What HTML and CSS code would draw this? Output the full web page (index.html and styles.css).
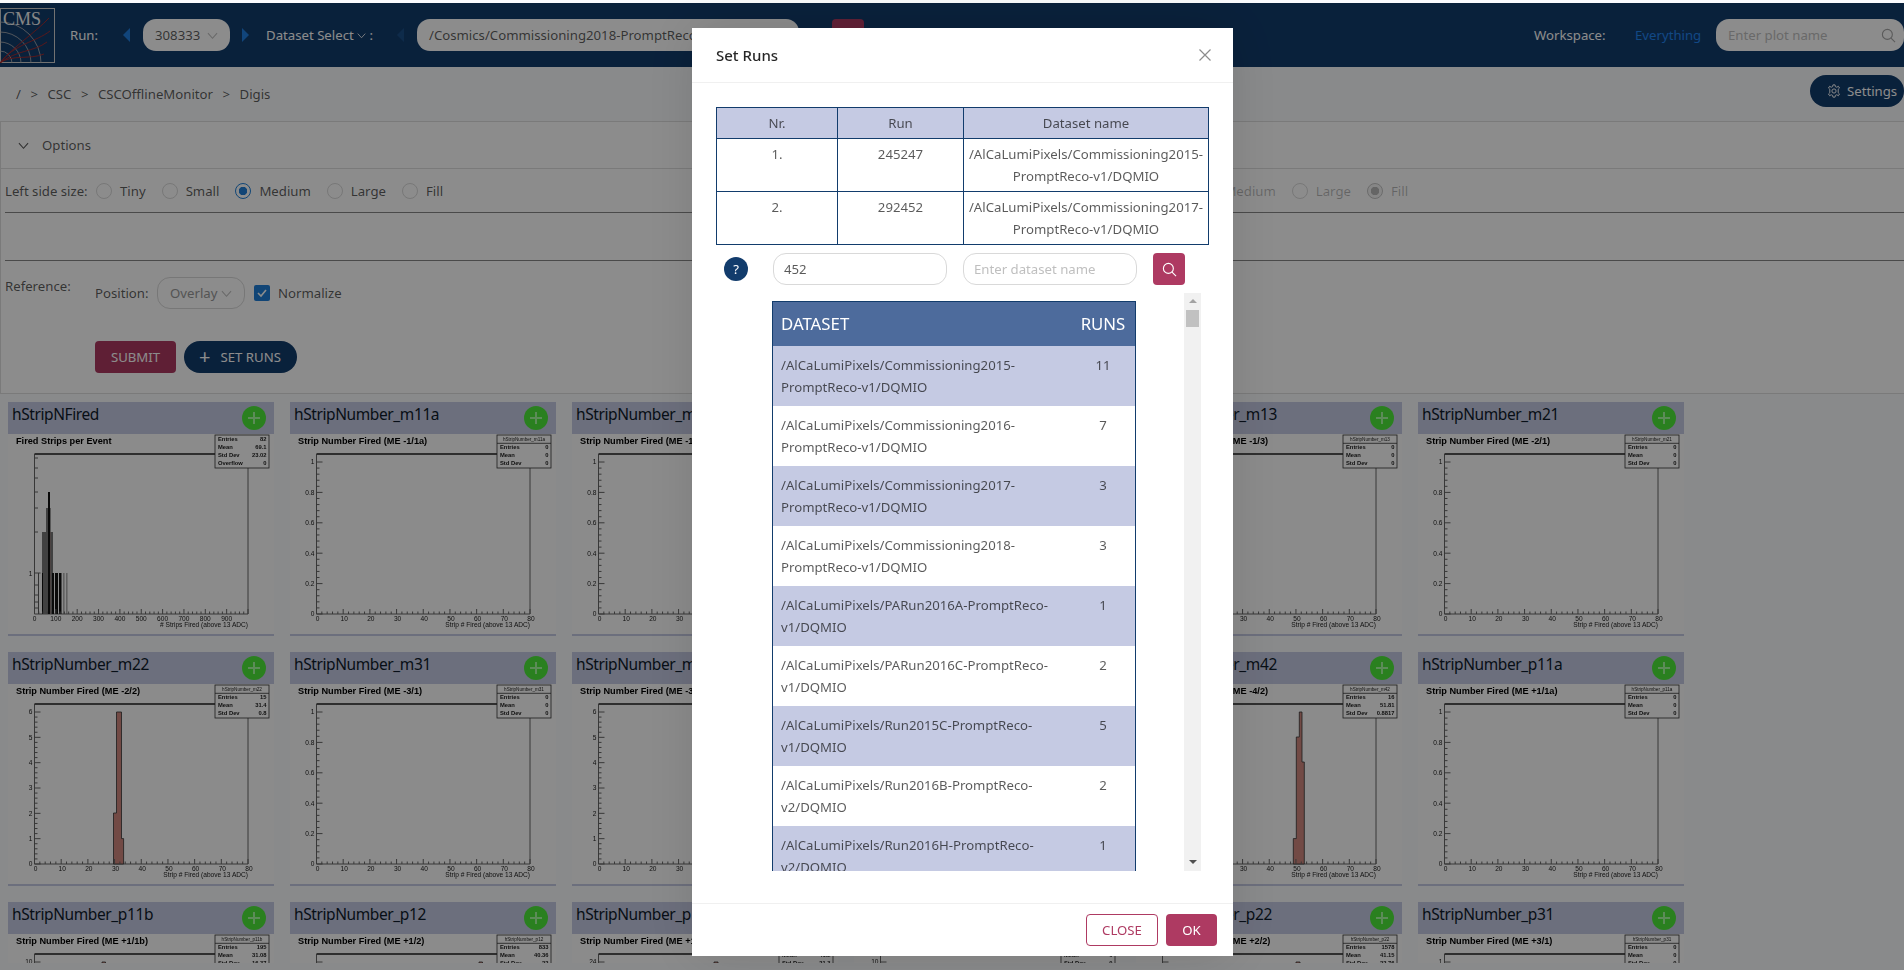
FILE: index.html
```html
<!DOCTYPE html>
<html>
<head>
  <title>DQM Plots</title>
  <link rel="stylesheet" href="styles.css">
</head>
<body>

  <div class="app">
    <header class="topbar">
      <svg class="logo" viewBox="0 0 55 55">
        <rect x="0.5" y="0.5" width="54" height="54" fill="none" stroke="#d0d0d0"/>
        <g fill="none" stroke="#b8b8b8" stroke-width="0.8">
          <path d="M0 14 A41 41 0 0 1 41 55"/>
          <path d="M0 24 A31 31 0 0 1 31 55"/>
          <path d="M0 34 A21 21 0 0 1 21 55"/>
          <path d="M0 43 A12 12 0 0 1 12 55"/>
        </g>
        <g fill="none" stroke="#b02a2a" stroke-width="0.9">
          <path d="M0 55 C14 38 36 24 49 10"/>
          <path d="M0 55 C14 36 36 34 50 23"/>
          <path d="M0 55 C16 42 34 44 47 34"/>
          <path d="M0 55 C12 46 30 52 44 46"/>
        </g>
        <text class="logo-text" x="3" y="17">CMS</text>
      </svg>
      <span class="bar-label run-label">Run:</span>
      <span class="arrow arrow-left"></span>
      <div class="pill run-pill"><span>308333</span><svg class="chev" viewBox="0 0 12 12"><path d="M1 3.5 L6 9 L11 3.5"/></svg></div>
      <span class="arrow arrow-right"></span>
      <span class="bar-label dataset-label">Dataset Select <svg class="chev chev-light" viewBox="0 0 12 12"><path d="M1 3.5 L6 9 L11 3.5"/></svg> :</span>
      <span class="arrow arrow-left arrow-off"></span>
      <div class="pill dataset-pill">/Cosmics/Commissioning2018-PromptReco-v1/DQMIO</div>
      <div class="bar-red"></div>
      <span class="bar-label workspace-label">Workspace:</span>
      <a class="workspace-link">Everything</a>
      <div class="pill search-pill"><span>Enter plot name</span>
        <svg class="search-icon" viewBox="0 0 16 16"><circle cx="6.8" cy="6.8" r="5.3"/><path d="M10.7 10.7 L15 15"/></svg>
      </div>
    </header>

    <div class="crumbs">
      <div class="crumb-list">
        <span>/</span><i>&gt;</i><span>CSC</span><i>&gt;</i><span>CSCOfflineMonitor</span><i>&gt;</i><span>Digis</span>
      </div>
      <button class="settings-btn">
        <svg viewBox="0 0 16 16"><circle cx="8" cy="8" r="2.4"/><path d="M6.8 1 H9.2 L9.6 3 L11.2 3.7 L13 2.6 L14.3 4.6 L12.8 6 V10 L14.3 11.4 L13 13.4 L11.2 12.3 L9.6 13 L9.2 15 H6.8 L6.4 13 L4.8 12.3 L3 13.4 L1.7 11.4 L3.2 10 V6 L1.7 4.6 L3 2.6 L4.8 3.7 L6.4 3 Z"/></svg>
        Settings
      </button>
    </div>

    <section class="options">
      <div class="options-head">
        <svg class="chev chev-dark" viewBox="0 0 12 12"><path d="M1 3.5 L6 9 L11 3.5"/></svg>
        Options
      </div>
      <div class="size-row">
        <div class="size-group">
          <span class="size-label">Left side size:</span>
          <label class="radio"><b></b>Tiny</label>
          <label class="radio"><b></b>Small</label>
          <label class="radio on"><b></b>Medium</label>
          <label class="radio"><b></b>Large</label>
          <label class="radio"><b></b>Fill</label>
        </div>
        <div class="size-group off">
          <span class="size-label">Right side size:</span>
          <label class="radio"><b></b>Tiny</label>
          <label class="radio"><b></b>Small</label>
          <label class="radio"><b></b>Medium</label>
          <label class="radio"><b></b>Large</label>
          <label class="radio on"><b></b>Fill</label>
        </div>
      </div>
      <div class="blank-row"></div>
      <div class="reference">
        <span class="reference-label">Reference:</span>
        <div class="reference-body">
          <div class="position-row">
            <span class="position-label">Position:</span>
            <div class="pill overlay-pill"><span>Overlay</span><svg class="chev" viewBox="0 0 12 12"><path d="M1 3.5 L6 9 L11 3.5"/></svg></div>
            <span class="check"><svg viewBox="0 0 16 16"><path d="M4 8 L7 11 L12 5"/></svg></span>
            <span>Normalize</span>
          </div>
          <div class="action-row">
            <button class="submit-btn">SUBMIT</button>
            <button class="runs-btn"><span class="plus">+</span>SET RUNS</button>
          </div>
        </div>
      </div>
    </section>

    <main class="plot-grid" id="plot-grid"></main>
  </div>

  <!-- Set Runs dialog -->
  <div class="backdrop"></div>
  <div class="modal">
    <div class="modal-head">
      <span>Set Runs</span>
      <svg class="modal-x" viewBox="0 0 12 12"><path d="M0.5 0.5 L11.5 11.5 M11.5 0.5 L0.5 11.5"/></svg>
    </div>
    <div class="modal-body">
      <table class="runs-table">
        <tr><th class="col-nr">Nr.</th><th class="col-run">Run</th><th>Dataset name</th></tr>
        <tr><td>1.</td><td>245247</td><td>/AlCaLumiPixels/Commissioning2015-PromptReco-v1/DQMIO</td></tr>
        <tr><td>2.</td><td>292452</td><td>/AlCaLumiPixels/Commissioning2017-PromptReco-v1/DQMIO</td></tr>
      </table>

      <div class="search-row">
        <span class="help">?</span>
        <div class="field">452</div>
        <div class="field field-empty">Enter dataset name</div>
        <button class="search-btn"><svg viewBox="0 0 16 16"><circle cx="6.8" cy="6.8" r="5.3"/><path d="M10.7 10.7 L15 15"/></svg></button>
      </div>

      <div class="list-wrap">
        <div class="list-clip">
          <table class="dataset-table">
            <tr><th>DATASET</th><th class="runs-col">RUNS</th></tr>
            <tr><td>/AlCaLumiPixels/Commissioning2015-PromptReco-v1/DQMIO</td><td class="runs-col">11</td></tr>
            <tr><td>/AlCaLumiPixels/Commissioning2016-PromptReco-v1/DQMIO</td><td class="runs-col">7</td></tr>
            <tr><td>/AlCaLumiPixels/Commissioning2017-PromptReco-v1/DQMIO</td><td class="runs-col">3</td></tr>
            <tr><td>/AlCaLumiPixels/Commissioning2018-PromptReco-v1/DQMIO</td><td class="runs-col">3</td></tr>
            <tr><td>/AlCaLumiPixels/PARun2016A-PromptReco-v1/DQMIO</td><td class="runs-col">1</td></tr>
            <tr><td>/AlCaLumiPixels/PARun2016C-PromptReco-v1/DQMIO</td><td class="runs-col">2</td></tr>
            <tr><td>/AlCaLumiPixels/Run2015C-PromptReco-v1/DQMIO</td><td class="runs-col">5</td></tr>
            <tr><td>/AlCaLumiPixels/Run2016B-PromptReco-v2/DQMIO</td><td class="runs-col">2</td></tr>
            <tr><td>/AlCaLumiPixels/Run2016H-PromptReco-v2/DQMIO</td><td class="runs-col">1</td></tr>
          </table>
        </div>
        <div class="scrollbar">
          <span class="scroll-up"></span>
          <span class="scroll-thumb"></span>
          <span class="scroll-down"></span>
        </div>
      </div>
    </div>
    <div class="modal-foot">
      <button class="close-btn">CLOSE</button>
      <button class="ok-btn">OK</button>
    </div>
  </div>

  <script src="plots.js"></script>
</body>
</html>
```

FILE: styles.css
```css
body {
  margin: 0;
  height: 970px;
  overflow: hidden;
  background-color: #fafbfd;
  font-family: "Noto Sans", sans-serif;
  font-size: 13.2px;
  line-height: 22px;
  color: rgba(0, 0, 0, 0.65);
}

button {
  font: inherit;
  border: none;
  cursor: pointer;
}

.app {
  height: 963px;
  padding-top: 3px;
  box-sizing: border-box;
  overflow: hidden;
}

/* Top bar */
.topbar {
  display: flex;
  align-items: center;
  height: 64px;
  background-color: #123c6c;
}

.logo {
  width: 55px;
  height: 55px;
  flex-shrink: 0;
}

.logo-text {
  font-family: "Liberation Serif", serif;
  font-size: 18px;
  fill: #f5f5f5;
}

.bar-label {
  color: #fff;
  white-space: nowrap;
}

.run-label {
  margin-left: 15px;
  width: 53px;
}

.arrow {
  width: 0;
  height: 0;
  border-top: 7px solid transparent;
  border-bottom: 7px solid transparent;
}

.arrow-left {
  border-right: 7px solid #1f7fe0;
}

.arrow-right {
  border-left: 7px solid #1f7fe0;
}

.arrow-off {
  border-right-color: #1b4f88;
}

.pill {
  display: flex;
  align-items: center;
  justify-content: space-between;
  height: 32px;
  box-sizing: border-box;
  border-radius: 13px;
  background-color: #fff;
  padding: 0 12px;
  white-space: nowrap;
  overflow: hidden;
}

.run-pill {
  width: 87px;
  margin-left: 13px;
}

.run-pill + .arrow {
  margin-left: 12px;
}

.dataset-label {
  margin-left: 17px;
  width: 131px;
}

.dataset-pill {
  width: 382px;
  margin-left: 13px;
}

.bar-red {
  width: 32px;
  height: 32px;
  margin-left: 33px;
  border-radius: 4px;
  background-color: #ae3a62;
}

.workspace-label {
  margin-left: auto;
  width: 101px;
}

.workspace-link {
  width: 81px;
  color: #2185f0;
}

.search-pill {
  width: 188px;
  padding-right: 8px;
  color: #bfbfbf;
}

.search-icon,
.search-btn svg {
  width: 15px;
  height: 15px;
  fill: none;
  stroke: #a6a6a6;
  stroke-width: 1.2;
}

.chev {
  width: 11px;
  height: 11px;
  fill: none;
  stroke: #bfbfbf;
  stroke-width: 1.1;
}

.chev-light {
  stroke: #fff;
  width: 9px;
  height: 9px;
}

.chev-dark {
  stroke: #555;
  margin-right: 13px;
}

/* Breadcrumb row */
.crumbs {
  display: flex;
  justify-content: space-between;
  align-items: center;
  height: 54px;
  box-sizing: border-box;
  padding: 0 0 0 16px;
}

.crumb-list i {
  font-style: normal;
  margin: 0 9.5px;
}

.settings-btn {
  display: flex;
  align-items: center;
  gap: 6px;
  width: 94px;
  height: 32px;
  margin-top: -6px;
  padding: 0 0 0 17px;
  border-radius: 16px;
  background-color: #123c6c;
  color: #fff;
}

.settings-btn svg {
  width: 14px;
  height: 14px;
  fill: none;
  stroke: #fff;
  stroke-width: 1.1;
}

/* Options panel */
.options {
  border: 1px solid #dedede;
  border-right: none;
  background-color: #fff;
  height: 273px;
  box-sizing: border-box;
}

.options-head {
  display: flex;
  align-items: center;
  height: 46px;
  padding-left: 17px;
  border-bottom: 1px solid #dedede;
}

.size-row {
  display: grid;
  grid-template-columns: 965px 1fr;
  height: 41px;
  padding-bottom: 2px;
  margin-left: 4px;
  border-bottom: 1px solid #888;
  align-items: center;
}

.size-group {
  display: flex;
  align-items: center;
}

.size-group.off {
  color: rgba(0, 0, 0, 0.28);
}

.size-label {
  width: 91px;
}

.radio {
  display: flex;
  align-items: center;
  gap: 8px;
  margin-right: 16px;
}

.radio b {
  display: block;
  width: 16px;
  height: 16px;
  box-sizing: border-box;
  border: 1px solid #d9d9d9;
  border-radius: 50%;
}

.radio.on b {
  border-color: #1f7fd8;
  background: radial-gradient(circle, #1f7fd8 0 4px, #fff 4.5px);
}

.off .radio.on b {
  border-color: #c4c4c4;
  background: radial-gradient(circle, #b8b8b8 0 4px, #f5f5f5 4.5px);
}

.blank-row {
  height: 47px;
  margin-left: 4px;
  border-bottom: 1px solid #888;
}

.reference {
  display: flex;
  margin-left: 4px;
  padding-top: 13px;
}

.reference-label {
  width: 90px;
  padding-top: 1px;
}

.position-row {
  display: flex;
  align-items: center;
  height: 32px;
  margin-top: 3px;
}

.position-label {
  width: 62px;
}

.overlay-pill {
  width: 88px;
  border: 1px solid #d9d9d9;
  color: #999;
  margin-right: 9px;
}

.check {
  display: block;
  width: 16px;
  height: 16px;
  margin-right: 8px;
  border-radius: 2px;
  background-color: #1f7fd8;
}

.check svg {
  display: block;
  fill: none;
  stroke: #fff;
  stroke-width: 1.6;
}

.action-row {
  display: flex;
  gap: 8px;
  margin-top: 32px;
}

.submit-btn {
  width: 81px;
  height: 32px;
  border-radius: 4px;
  background-color: #ae3a62;
  color: #fff;
}

.runs-btn {
  display: flex;
  align-items: center;
  width: 113px;
  height: 32px;
  padding: 0 0 0 15px;
  border-radius: 16px;
  background-color: #123c6c;
  color: #fff;
}

.plus {
  font-size: 20px;
  margin-right: 10px;
}

/* Plot cards */
.plot-grid {
  display: grid;
  grid-template-columns: repeat(6, 266px);
  grid-auto-rows: 234px;
  gap: 16px;
  padding: 8px 0 0 8px;
}

.card {
  background-color: #fdfdfd;
  border-bottom: 2px solid #c5cae3;
  box-sizing: border-box;
  overflow: hidden;
}

.card-head {
  display: flex;
  justify-content: space-between;
  height: 32px;
  padding: 0 8px 0 4px;
  background-color: #c5cae3;
  font-size: 15.5px;
  letter-spacing: -0.4px;
  line-height: 25px;
  color: #0e1a2a;
}

.add-btn {
  width: 24px;
  height: 24px;
  margin-top: 4px;
  border-radius: 50%;
  background-color: #4eea3a;
  position: relative;
}

.add-btn::before,
.add-btn::after {
  content: "";
  position: absolute;
  left: 6px;
  top: 11px;
  width: 12px;
  height: 2px;
  background-color: #a8ffa0;
}

.add-btn::after {
  transform: rotate(90deg);
}

.plot {
  display: block;
  width: 266px;
  height: 200px;
  filter: blur(0.35px);
}

.plot text {
  font-family: "Liberation Sans", sans-serif;
  font-size: 6.6px;
  fill: #222;
}

.plot .plot-title {
  font-size: 9.2px;
  font-weight: bold;
  fill: #000;
}

.plot .stat-title {
  font-size: 4.6px;
}

.plot .stat-row {
  font-size: 5.8px;
  font-weight: bold;
}

.plot-frame {
  fill: none;
  stroke: #666;
  stroke-width: 1;
}

.plot-top {
  stroke: #555;
  stroke-width: 2;
}

.stat-box {
  fill: #fdfdfd;
  stroke: #333;
  stroke-width: 0.8;
}

.hist {
  fill: #d0887f;
  stroke: #333;
  stroke-width: 0.8;
}

/* Dialog */
.backdrop {
  position: fixed;
  top: 3px;
  left: 0;
  right: 0;
  bottom: 0;
  background-color: rgba(0, 0, 0, 0.45);
}

.modal {
  position: fixed;
  top: 28px;
  left: 692px;
  width: 541px;
  height: 928px;
  display: flex;
  flex-direction: column;
  background-color: #fff;
  box-shadow: 0 0 50px rgba(0, 0, 0, 0.12);
}

.modal-head {
  display: flex;
  justify-content: space-between;
  align-items: center;
  height: 54px;
  flex-shrink: 0;
  padding: 0 22px 0 24px;
  border-bottom: 1px solid #f0f0f0;
  font-size: 15px;
  font-weight: 500;
  color: rgba(0, 0, 0, 0.85);
}

.modal-x {
  width: 12px;
  height: 12px;
  stroke: #8c8c8c;
  stroke-width: 1.2;
}

.modal-body {
  flex: 1;
  padding: 24px;
}

.runs-table {
  width: 493px;
  border-collapse: collapse;
  table-layout: fixed;
  text-align: center;
}

.runs-table th,
.runs-table td {
  border: 1px solid #123c6c;
  padding: 4px 4px;
  font-weight: normal;
  vertical-align: top;
}

.runs-table th {
  background-color: #c5cae3;
}

.col-nr {
  width: 112px;
}

.col-run {
  width: 117px;
}

.search-row {
  display: flex;
  align-items: center;
  margin-top: 8px;
}

.help {
  width: 24px;
  height: 24px;
  margin-left: 8px;
  margin-right: 25px;
  border-radius: 50%;
  background-color: #123c6c;
  color: #fff;
  text-align: center;
  line-height: 24px;
}

.field {
  width: 174px;
  height: 32px;
  box-sizing: border-box;
  padding: 4px 10px;
  margin-right: 16px;
  border: 1px solid #d9d9d9;
  border-radius: 13px;
}

.field-empty {
  color: #bfbfbf;
}

.search-btn {
  width: 32px;
  height: 32px;
  padding: 0;
  border-radius: 4px;
  background-color: #ae3a62;
}

.search-btn svg {
  display: block;
  margin: auto;
  stroke: #fff;
}

.list-wrap {
  display: flex;
  justify-content: space-between;
  width: 429px;
  height: 578px;
  margin-top: 8px;
  margin-left: 56px;
}

.list-clip {
  width: 364px;
  padding-top: 8px;
  overflow: hidden;
}

.dataset-table {
  width: 364px;
  box-sizing: border-box;
  border-collapse: separate;
  border-spacing: 0;
  border: 1px solid #123c6c;
}

.dataset-table th {
  height: 44px;
  box-sizing: border-box;
  padding: 0 8px;
  background-color: #4d6b9c;
  color: #fff;
  font-size: 16.8px;
  font-weight: normal;
  text-align: left;
}

.dataset-table td {
  height: 60px;
  box-sizing: border-box;
  padding: 8px;
  vertical-align: top;
}

.dataset-table th.runs-col,
.dataset-table td.runs-col {
  width: 64px;
  text-align: center;
}

.dataset-table tr:nth-child(even) td {
  background-color: #c5cae3;
}

.scrollbar {
  width: 17px;
  background-color: #f1f1f1;
  display: flex;
  flex-direction: column;
  align-items: center;
}

.scroll-up,
.scroll-down {
  width: 0;
  height: 0;
  border-left: 4px solid transparent;
  border-right: 4px solid transparent;
}

.scroll-up {
  margin-top: 6px;
  border-bottom: 4px solid #a3a3a3;
}

.scroll-thumb {
  width: 13px;
  height: 17px;
  margin-top: 7px;
  background-color: #c1c1c1;
}

.scroll-down {
  margin-top: auto;
  margin-bottom: 7px;
  border-top: 4px solid #505050;
}

.modal-foot {
  display: flex;
  justify-content: flex-end;
  gap: 8px;
  height: 53px;
  flex-shrink: 0;
  box-sizing: border-box;
  padding: 10px 16px;
  border-top: 1px solid #f0f0f0;
}

.close-btn,
.ok-btn {
  height: 32px;
  border-radius: 4px;
}

.close-btn {
  width: 72px;
  background-color: #fff;
  border: 1px solid #ae3a62;
  color: #ae3a62;
}

.ok-btn {
  width: 51px;
  background-color: #ae3a62;
  color: #fff;
}
```

FILE: plots.js
```js
const plotGrid = document.getElementById('plot-grid');

const LEFT = 26.5, RIGHT = 240, TOP = 20, BOTTOM = 180;

// name, plot title, stat rows, histogram steps [x0, x1, top y]
const emptyStats = [['Entries', '0'], ['Mean', '0'], ['Std Dev', '0']];
const plots = [
  { name: 'hStripNFired', title: 'Fired Strips per Event', noBoxTitle: true, nfired: true,
    stats: [['Entries', '82'], ['Mean', '69.1'], ['Std Dev', '23.02'], ['Overflow', '0']] },
  { name: 'hStripNumber_m11a', title: 'Strip Number Fired (ME -1/1a)', stats: emptyStats },
  { name: 'hStripNumber_m11b', title: 'Strip Number Fired (ME -1/1b)', stats: emptyStats },
  { name: 'hStripNumber_m12', title: 'Strip Number Fired (ME -1/2)', stats: emptyStats },
  { name: 'hStripNumber_m13', title: 'Strip Number Fired (ME -1/3)', stats: emptyStats },
  { name: 'hStripNumber_m21', title: 'Strip Number Fired (ME -2/1)', stats: emptyStats },
  { name: 'hStripNumber_m22', title: 'Strip Number Fired (ME -2/2)', yMax: 6,
    stats: [['Entries', '15'], ['Mean', '31.4'], ['Std Dev', '0.8']],
    bars: [[105.5, 108.5, 129], [108.5, 113.5, 28], [113.5, 115.6, 154.6]] },
  { name: 'hStripNumber_m31', title: 'Strip Number Fired (ME -3/1)', stats: emptyStats },
  { name: 'hStripNumber_m32', title: 'Strip Number Fired (ME -3/2)', yMax: 6, stats: emptyStats },
  { name: 'hStripNumber_m41', title: 'Strip Number Fired (ME -4/1)', stats: emptyStats },
  { name: 'hStripNumber_m42', title: 'Strip Number Fired (ME -4/2)', yMax: 6,
    stats: [['Entries', '16'], ['Mean', '51.81'], ['Std Dev', '0.8817']],
    bars: [[157.3, 160.3, 154.6], [160.3, 163.3, 53], [163.3, 166, 28], [166, 168.3, 78]] },
  { name: 'hStripNumber_p11a', title: 'Strip Number Fired (ME +1/1a)', stats: emptyStats },
  { name: 'hStripNumber_p11b', title: 'Strip Number Fired (ME +1/1b)', yMax: 10, bars: [[94, 97.5, 28]],
    stats: [['Entries', '195'], ['Mean', '31.08'], ['Std Dev', '16.37']] },
  { name: 'hStripNumber_p12', title: 'Strip Number Fired (ME +1/2)', yMax: 10, noLabel: true, bars: [[189, 192.5, 28]],
    stats: [['Entries', '833'], ['Mean', '40.36'], ['Std Dev', '22']] },
  { name: 'hStripNumber_p13', title: 'Strip Number Fired (ME +1/3)', yMax: 24, bars: [[142, 146, 28]],
    stats: [['Entries', '1102'], ['Mean', '41.2'], ['Std Dev', '21.3']] },
  { name: 'hStripNumber_p21', title: 'Strip Number Fired (ME +2/1)', yMax: 10, stats: emptyStats },
  { name: 'hStripNumber_p22', title: 'Strip Number Fired (ME +2/2)', yMax: 10, noLabel: true, bars: [[160, 164, 28]],
    stats: [['Entries', '1578'], ['Mean', '41.15'], ['Std Dev', '22.76']] },
  { name: 'hStripNumber_p31', title: 'Strip Number Fired (ME +3/1)', stats: emptyStats }
];

function line(x1, y1, x2, y2) {
  return `<path class="plot-frame" d="M${x1} ${y1} L${x2} ${y2}"/>`;
}

function xAxis(plot) {
  let out = '';
  const width = RIGHT - LEFT;
  if (plot.nfired) {
    for (let v = 0; v <= 50; v++) {
      const x = LEFT + width * v / 50;
      out += line(x, BOTTOM, x, BOTTOM - (v % 5 === 0 ? 5 : 2.5));
    }
    for (let v = 0; v < 1000; v += 100) {
      out += `<text x="${LEFT + width * v / 1000}" y="186.5" text-anchor="middle">${v}</text>`;
    }
  } else {
    for (let v = 0; v <= 40; v++) {
      const x = LEFT + width * v / 40;
      out += line(x, BOTTOM, x, BOTTOM - (v % 5 === 0 ? 5 : 2.5));
    }
    for (let v = 0; v <= 80; v += 10) {
      out += `<text x="${LEFT + width * v / 80 + 1}" y="186.5" text-anchor="middle">${v}</text>`;
    }
  }
  const axisTitle = plot.nfired ? '# Strips Fired (above 13 ADC)' : 'Strip # Fired (above 13 ADC)';
  out += `<text x="${RIGHT}" y="193" text-anchor="end">${axisTitle}</text>`;
  return out;
}

function yAxis(plot) {
  let out = '';
  if (plot.nfired) {
    // log axis, only one decade is labelled
    [24, 34, 44, 58, 74, 98, 151, 161, 168, 174].forEach(y => {
      out += line(LEFT, y, LEFT + 3.5, y);
    });
    out += line(LEFT, 139, LEFT + 6, 139);
    out += `<text x="${LEFT - 2}" y="141.5" text-anchor="end">1</text>`;
    return out;
  }
  const max = plot.yMax || 1;
  const topY = 28;
  const divisions = max === 1 ? 5 : (max === 6 ? 6 : 5);
  for (let i = 0; i <= divisions; i++) {
    const y = BOTTOM - (BOTTOM - topY) * i / divisions;
    out += line(LEFT, y, LEFT + 6, y);
    if (i < divisions) {
      for (let m = 1; m < 5; m++) {
        const ym = y - (BOTTOM - topY) / divisions * m / 5;
        out += line(LEFT, ym, LEFT + 3, ym);
      }
    }
    const value = max === 1 ? (i / 5).toFixed(1).replace('.0', '') : max * i / divisions;
    if (!plot.noLabel) {
      out += `<text x="${LEFT - 2}" y="${y + 2.3}" text-anchor="end">${value}</text>`;
    }
  }
  return out;
}

function nfiredBars() {
  const rects = [
    [34, 139, 11, '#d0887f'], [34, 98, 11, '#777'], [38.7, 98, 4, '#d0887f'],
    [38, 74, 4.7, '#777'], [40, 58, 2, '#111'],
    [34, 139, 1, '#111'], [44, 139, 2, '#111'], [47, 139, 3, '#111'], [51, 139, 2.5, '#111'],
    [30, 139, 0.8, '#333'], [55.5, 139, 0.8, '#666'], [58.5, 139, 0.8, '#666']
  ];
  return rects.map(r =>
    `<rect x="${r[0]}" y="${r[1]}" width="${r[2]}" height="${BOTTOM - r[1]}" fill="${r[3]}"/>`
  ).join('');
}

// one outline around all the steps, like ROOT draws it
function histPath(bars) {
  if (!bars || !bars.length) return '';
  let d = `M${bars[0][0]} ${BOTTOM}`;
  bars.forEach(b => {
    d += ` L${b[0]} ${b[2]} L${b[1]} ${b[2]}`;
  });
  d += ` L${bars[bars.length - 1][1]} ${BOTTOM} Z`;
  return `<path class="hist" d="${d}"/>`;
}

function statBox(plot) {
  let out = '<rect class="stat-box" x="207" y="1" width="54" height="33"/>';
  let y = 7.4;
  if (!plot.noBoxTitle) {
    out += `<text class="stat-title" x="234" y="6.6" text-anchor="middle">${plot.name}</text>`;
    out += '<path class="stat-box" d="M207 9.3 H261"/>';
    y = 15.4;
  }
  plot.stats.forEach(row => {
    out += `<text class="stat-row" x="210" y="${y}">${row[0]}</text>`;
    out += `<text class="stat-row" x="258.5" y="${y}" text-anchor="end">${row[1]}</text>`;
    y += 8;
  });
  return out;
}

function plotSvg(plot) {
  return `<svg class="plot" viewBox="0 0 266 200">
    <rect width="266" height="200" fill="#fdfdfd"/>
    <text class="plot-title" x="8" y="10">${plot.title}</text>
    ${line(LEFT, TOP, LEFT, BOTTOM)}${line(LEFT, BOTTOM, RIGHT, BOTTOM)}${line(RIGHT, TOP, RIGHT, BOTTOM)}
    <path class="plot-frame plot-top" d="M${LEFT} ${TOP} H${RIGHT}"/>
    ${plot.nfired ? nfiredBars() : histPath(plot.bars)}
    ${xAxis(plot)}${yAxis(plot)}${statBox(plot)}
  </svg>`;
}

plots.forEach(plot => {
  const card = document.createElement('div');
  card.className = 'card';
  card.innerHTML = `<div class="card-head"><span>${plot.name}</span><span class="add-btn"></span></div>${plotSvg(plot)}`;
  plotGrid.appendChild(card);
});
```
